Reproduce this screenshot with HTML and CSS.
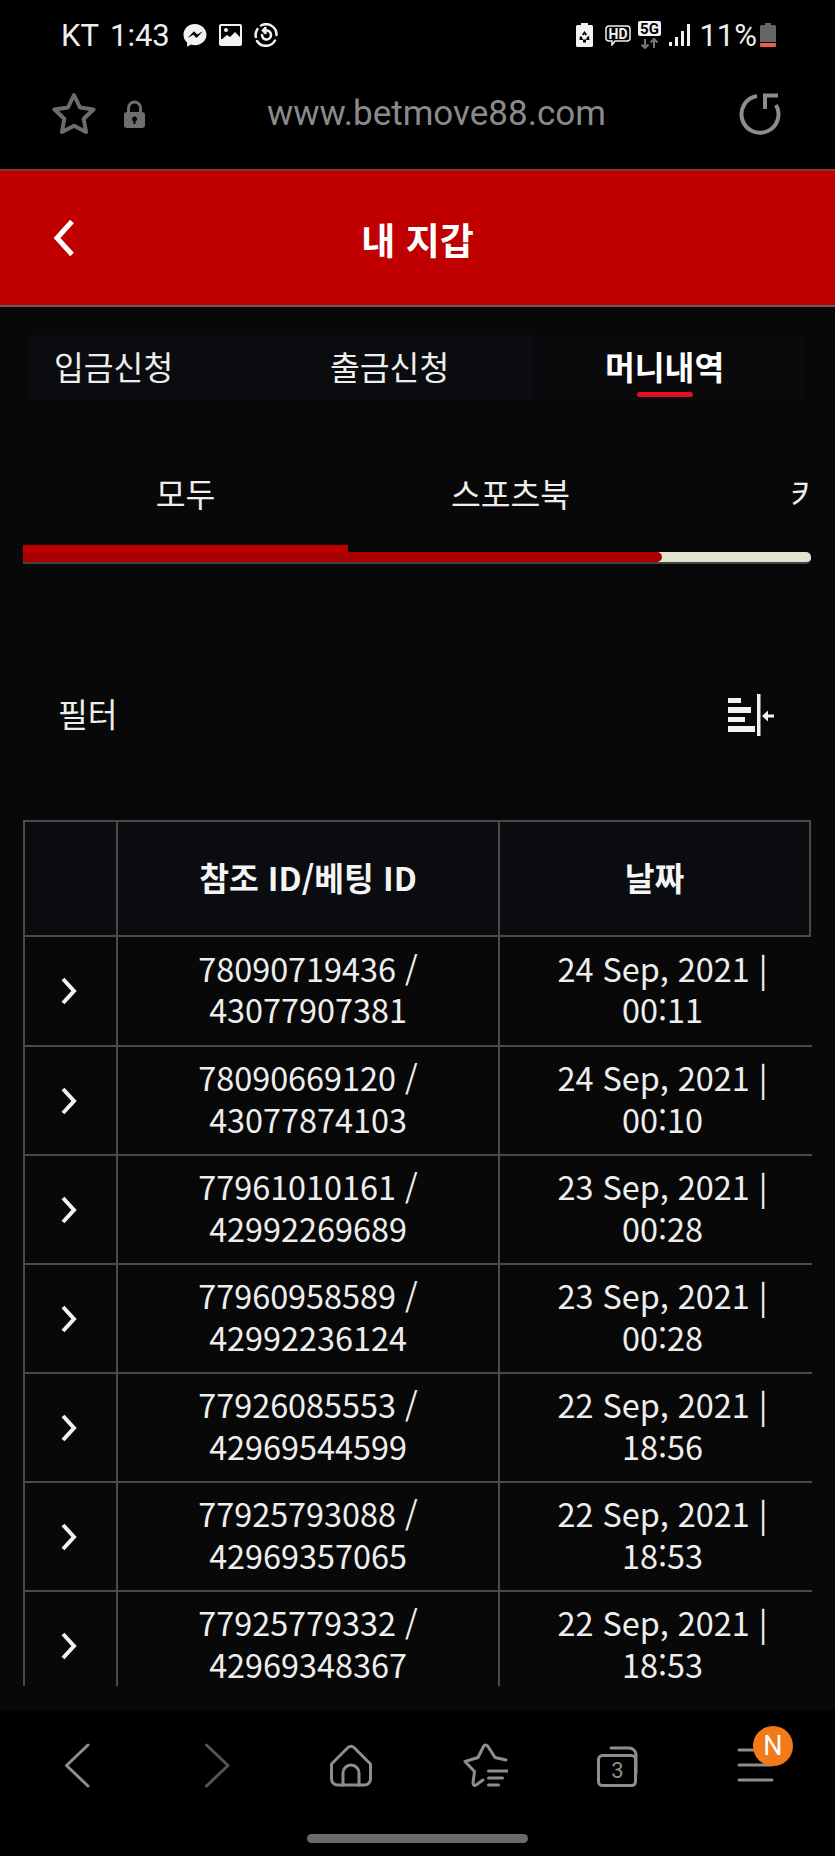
FILE: index.html
```html
<!DOCTYPE html>
<html lang="ko">
<head>
<meta charset="utf-8">
<title>내 지갑</title>
<link rel="stylesheet" href="styles.css">
</head>
<body>
<div class="phone">
  <div class="status">
    <div class="status-left">
      <span class="carrier">KT</span><span class="clock">1:43</span>
      <svg class="si-msg" width="24" height="25" viewBox="0 0 24 25"><path class="white" d="M12 1C5.400 1 .5 5.700.5 11.800c0 3.200 1.300 5.900 3.600 7.800v4.200l3.900-2.200c1.300.4 2.600.6 4 .6 6.600 0 11.500-4.700 11.500-10.400S18.600 1 12 1z"/><path class="blk" d="M4.700 15l6.300-6.800 3.200 3.300 5.600-3.300-6.200 6.800-3.300-3.300z"/></svg>
      <svg class="si-img" width="23" height="22" viewBox="0 0 23 22"><rect class="white" width="23" height="22" rx="2"/><rect class="blk" x="2" y="2" width="19" height="13"/><circle class="white" cx="7" cy="6" r="2"/><path class="white" d="M2 16l6-5 3 2 5-5 5 5v4z"/></svg>
      <svg class="si-sync" width="24" height="24" viewBox="0 0 24 24"><path class="ln2w" d="M7 2.500A10.500 10.500 0 0 1 22.500 12M21 17.500A10.500 10.500 0 0 1 3 18M1.800 14A10.500 10.500 0 0 1 3.500 6"/><path class="ln2w" d="M8 12a4.500 4.500 0 1 0 4-4.500H9M11.500 5L9 7.500l2.500 2.500"/></svg>
    </div>
    <div class="status-right">
      <svg width="17" height="24" viewBox="0 0 17 24"><path class="white" d="M5 0h7v2h3.500A1.500 1.500 0 0 1 17 3.500V22.500A1.500 1.500 0 0 1 15.500 24H1.500A1.500 1.500 0 0 1 0 22.500V3.500A1.500 1.500 0 0 1 1.500 2H5z"/><path class="blk" d="M8.500 8l2.500 3.500-1.500 1-1-1.500-1 1.500-1.500-1zM4 13l2 1 1 3H3.500zM13 13l-2 1-1 3h3.500zM7 16.500h3v3H7z"/></svg>
      <svg class="si-hd" width="26" height="21" viewBox="0 0 26 21"><path class="ln15" d="M4 1h18a3 3 0 0 1 3 3v9a3 3 0 0 1-3 3H10l-3 4v-4H4a3 3 0 0 1-3-3V4a3 3 0 0 1 3-3z"/><text class="hd-text" x="13" y="13.500">HD</text></svg>
      <svg class="si-5g" width="23" height="28" viewBox="0 0 23 28"><rect class="white" width="23" height="15" rx="2"/><text class="g-text" x="11.500" y="13">5G</text><path class="ln-grey" d="M7 18v9M3.500 23.500L7 27l3.500-3.500M16 27v-9M12.500 21.500L16 18l3.500 3.500"/></svg>
      <svg class="si-sig" width="21" height="22" viewBox="0 0 21 22"><rect class="white" x="0" y="18" width="3" height="4"/><rect class="white" x="6" y="13" width="3" height="9"/><rect class="white" x="12" y="7" width="3" height="15"/><rect class="white" x="18" y="0" width="3" height="22"/></svg>
      <span class="pct">11%</span>
      <svg class="si-bat" width="16" height="24" viewBox="0 0 16 24"><path class="grey" d="M5 0h6v2h3.500A1.500 1.500 0 0 1 16 3.500V19H0V3.500A1.500 1.500 0 0 1 1.500 2H5z"/><path class="red" d="M0 20h16v2.500a1.500 1.500 0 0 1-1.500 1.500h-13A1.500 1.500 0 0 1 0 22.500z"/></svg>
    </div>
  </div>

  <div class="urlbar">
    <svg class="u-star" width="44" height="44" viewBox="0 0 44 44"><path class="ln-u" d="M22 3l6 12.500 13.500 2-9.800 9.300 2.300 13.200-12-6.300-12 6.300 2.300-13.200-9.800-9.300 13.500-2z"/></svg>
    <svg class="u-lock" width="21" height="28" viewBox="0 0 21 28"><path class="ln-lock" d="M4.500 14V8a6 6 0 0 1 12 0v6"/><rect class="lockfill" y="12" width="21" height="16" rx="3"/><circle class="blk" cx="10.500" cy="19" r="2.500"/><rect class="blk" x="9.500" y="19" width="2" height="5"/></svg>
    <span class="url">www.betmove88.com</span>
    <svg class="u-reload" width="42" height="42" viewBox="0 0 42 42"><path class="ln-r" d="M18 3A18.500 18.500 0 1 0 37 12"/><path class="ln-r" d="M39 2.500H26V16"/></svg>
  </div>

  <main class="app">
    <header class="appbar">
      <svg class="back" width="22" height="38" viewBox="0 0 22 38"><path class="ln-back" d="M19 2.500L4 19l15 16.500"/></svg>
      <h1 class="title">내 지갑</h1>
    </header>

    <nav class="tabs">
      <a class="tab">입금신청</a>
      <a class="tab">출금신청</a>
      <a class="tab tab-active"><span class="tab-label">머니내역<i class="tab-mark"></i></span></a>
    </nav>

    <div class="subtabs">
      <span class="subtab">모두</span>
      <span class="subtab">스포츠북</span>
      <span class="subtab">카지노</span>
    </div>
    <div class="meter">
      <div class="meter-tab"></div>
      <div class="meter-track"><div class="meter-fill"></div></div>
    </div>

    <div class="filter">
      <span class="filter-label">필터</span>
      <svg width="46" height="42" viewBox="0 0 46 42"><rect class="white" x="0" y="4" width="13" height="5"/><rect class="white" x="0" y="13" width="23" height="6"/><rect class="white" x="0" y="23" width="17" height="5"/><rect class="white" x="0" y="32" width="27" height="6"/><rect class="white" x="29" y="0" width="3.500" height="42"/><path class="white" d="M34 22l6-5.500v4h6v3h-6v4z"/></svg>
    </div>

    <div class="table-clip">
      <table class="grid grid-head">
        <colgroup><col class="c1"><col class="c2"><col class="c3-head"></colgroup>
        <thead>
          <tr><th></th><th>참조 ID/베팅 ID</th><th>날짜</th></tr>
        </thead>
      </table>
      <table class="grid grid-body">
        <colgroup><col class="c1"><col class="c2"><col class="c3-body"></colgroup>
        <tbody>
          <tr><td><svg class="chev" width="18" height="28" viewBox="0 0 18 28"><path class="ln-chev" d="M3 2l11 12L3 26"/></svg></td><td>78090719436 / 43077907381</td><td>24 Sep, 2021 | 00:11</td></tr>
          <tr><td><svg class="chev" width="18" height="28" viewBox="0 0 18 28"><path class="ln-chev" d="M3 2l11 12L3 26"/></svg></td><td>78090669120 / 43077874103</td><td>24 Sep, 2021 | 00:10</td></tr>
          <tr><td><svg class="chev" width="18" height="28" viewBox="0 0 18 28"><path class="ln-chev" d="M3 2l11 12L3 26"/></svg></td><td>77961010161 / 42992269689</td><td>23 Sep, 2021 | 00:28</td></tr>
          <tr><td><svg class="chev" width="18" height="28" viewBox="0 0 18 28"><path class="ln-chev" d="M3 2l11 12L3 26"/></svg></td><td>77960958589 / 42992236124</td><td>23 Sep, 2021 | 00:28</td></tr>
          <tr><td><svg class="chev" width="18" height="28" viewBox="0 0 18 28"><path class="ln-chev" d="M3 2l11 12L3 26"/></svg></td><td>77926085553 / 42969544599</td><td>22 Sep, 2021 | 18:56</td></tr>
          <tr><td><svg class="chev" width="18" height="28" viewBox="0 0 18 28"><path class="ln-chev" d="M3 2l11 12L3 26"/></svg></td><td>77925793088 / 42969357065</td><td>22 Sep, 2021 | 18:53</td></tr>
          <tr><td><svg class="chev" width="18" height="28" viewBox="0 0 18 28"><path class="ln-chev" d="M3 2l11 12L3 26"/></svg></td><td>77925779332 / 42969348367</td><td>22 Sep, 2021 | 18:53</td></tr>
        </tbody>
      </table>
    </div>
  </main>

  <footer class="nav">
    <div class="nav-row">
      <div class="nav-cell"><svg width="50" height="50" viewBox="0 0 50 50"><path class="ln-nav" d="M35 5L13.500 25.500 35 46"/></svg></div>
      <div class="nav-cell"><svg width="50" height="50" viewBox="0 0 50 50"><path class="ln-nav-dim" d="M18.500 5L40 25.500 18.500 46"/></svg></div>
      <div class="nav-cell"><svg width="50" height="50" viewBox="0 0 50 50"><path class="ln-nav" d="M8.500 24L25 7.500a4.500 4.500 0 0 1 6 0L47.500 24v15a6 6 0 0 1-6 6h-27a6 6 0 0 1-6-6z"/><path class="ln-nav" d="M20 45V33a8 8 0 0 1 16 0v12"/></svg></div>
      <div class="nav-cell"><svg width="50" height="50" viewBox="0 0 50 50"><path class="ln-nav" d="M48 20L37 17.500 30 6.500c-1.500-2-3.500-2-4.500 0L20 17.500 7 21.500l9.500 10L15 43c0 2.500 1.500 3 3 2l7-5"/><path class="ln-nav" d="M30.500 31h19M30.500 38h14M30.500 45h10"/></svg></div>
      <div class="nav-cell"><svg width="50" height="50" viewBox="0 0 50 50"><path class="ln-nav" d="M18 8h18a7 7 0 0 1 7 7v18"/><rect class="ln-nav" x="5.500" y="15.500" width="37" height="30" rx="4"/><text class="tab-count" x="24.500" y="38">3</text></svg></div>
      <div class="nav-cell nav-menu"><svg width="50" height="50" viewBox="0 0 50 50"><path class="ln-nav" d="M11 10h33M11 25h33M11 40h33"/></svg><span class="badge">N</span></div>
    </div>
    <div class="home-bar"></div>
  </footer>
</div>
</body>
</html>
```

FILE: styles.css
```css
* { box-sizing: border-box; }
html, body { margin: 0; padding: 0; background: #000; }
body { font-family: "Noto Sans CJK KR", "Noto Sans", sans-serif; color: #eee; }

.phone { width: 835px; height: 1856px; display: flex; flex-direction: column; overflow: hidden; background: #000; }

/* svg paint helpers */
.white { fill: #f2f2f2; }
.blk { fill: #000; }
.grey { fill: #666; }
.red { fill: #e8604a; }
.lockfill { fill: #6e6e6e; }
.ln2w { fill: none; stroke: #f2f2f2; stroke-width: 2.5; stroke-linecap: round; }
.ln15 { fill: none; stroke: #f2f2f2; stroke-width: 1.5; }
.ln-grey { fill: none; stroke: #777; stroke-width: 2; }
.ln-u { fill: none; stroke: #6c6c6c; stroke-width: 4; stroke-linejoin: round; }
.ln-lock { fill: none; stroke: #6e6e6e; stroke-width: 3; }
.ln-r { fill: none; stroke: #8c8c8c; stroke-width: 4; }
.ln-back { fill: none; stroke: #fff; stroke-width: 5; }
.ln-chev { fill: none; stroke: #f2f2f2; stroke-width: 4; }
.ln-nav { fill: none; stroke: #8e8e8e; stroke-width: 3; stroke-linecap: round; stroke-linejoin: round; }
.ln-nav-dim { fill: none; stroke: #555; stroke-width: 3; stroke-linecap: round; stroke-linejoin: round; }
.hd-text { font: 700 14px "Roboto", sans-serif; fill: #f2f2f2; text-anchor: middle; }
.g-text { font: 700 15px "Roboto", sans-serif; fill: #000; text-anchor: middle; }
.tab-count { font: 400 22px "Roboto", sans-serif; fill: #8e8e8e; text-anchor: middle; }

/* status bar */
.status { height: 60px; padding: 10px 59px 0 61px; display: flex; justify-content: space-between; align-items: center; font: 400 31px/1 "Roboto", sans-serif; color: #eee; }
.status-left, .status-right { display: flex; align-items: center; }
.carrier { margin-right: 11px; }
.si-msg { margin-left: 13px; }
.si-img { margin-left: 12px; }
.si-sync { margin-left: 12px; }
.si-hd { margin-left: 12px; }
.si-5g { margin-left: 7px; }
.si-sig { margin-left: 8px; }
.pct { margin-left: 9px; }
.si-bat { margin-left: 3px; }

/* url bar */
.urlbar { height: 109px; display: flex; align-items: center; padding: 0 0 2px 52px; }
.u-lock { margin-left: 28px; }
.url { margin-left: 122px; width: 338px; font: 400 35px/1 "Roboto", sans-serif; color: #8a8a8a; white-space: nowrap; }
.u-reload { margin-left: 134px; }

/* app */
.app { flex: 1; min-height: 0; display: flex; flex-direction: column; background: #080808; }
.appbar { height: 138px; flex: none; position: relative; display: flex; align-items: center; justify-content: center; background: #c00000; border-top: 2px solid #8a3434; border-bottom: 2px solid #6a5a5a; }
.back { position: absolute; left: 53px; top: 48px; }
.title { margin: 0 0 -2px; font: 700 37px/1 "Noto Sans CJK KR", sans-serif; color: #fff; }

.tabs { flex: none; margin: 28px 31px 0 29px; height: 65px; display: grid; grid-template-columns: 276px 228px 271px; background: #0a0c10; }
.tab { padding: 11px 0 0 25px; font-size: 32.4px; line-height: 40px; color: #eee; }
.tab-active { padding-left: 72px; background: #0a0a0c; font-weight: 700; color: #fff; }
.tab-label { display: inline-flex; flex-direction: column; align-items: center; }
.tab-mark { display: block; width: 56px; height: 5px; margin-top: 6px; border-radius: 3px; background: #e01020; }

.subtabs { flex: none; margin: 73px 24px 0 23px; height: 72px; display: flex; overflow: hidden; }
.subtab { flex: 0 0 325px; text-align: center; font-size: 32.4px; line-height: 40px; color: #eee; }

.meter { flex: none; margin: 0 24px 0 23px; }
.meter-tab { width: 325px; height: 7px; background: #c00000; }
.meter-track { height: 12px; border-bottom: 2px solid #444; background: #e2e2d0; border-radius: 0 5px 5px 0; }
.meter-fill { width: 639px; height: 10px; border-radius: 0 5px 5px 0; background: #a80000; }

.filter { flex: none; margin-top: 111px; height: 80px; padding: 0 61px 4px 58px; display: flex; align-items: center; justify-content: space-between; }
.filter svg { margin-bottom: -4px; }
.filter-label { font-size: 32.4px; line-height: 40px; color: #eee; }

.table-clip { flex: none; height: 866px; margin: 65px 23px 0 23px; overflow: hidden; }
.grid { border-collapse: collapse; table-layout: fixed; }
.grid-head { width: 786px; background: #0a0c10; }
.grid-body { width: 802px; }
.c1 { width: 93px; }
.c2 { width: 382px; }
.c3-head { width: 311px; }
.c3-body { width: 327px; }
.grid th, .grid td { border: 2px solid #4a4a4a; text-align: center; font-size: 32.4px; color: #eee; }
.grid th { height: 115px; padding: 0 0 4px; font-weight: 700; line-height: 40px; color: #f4f4f4; }
.grid td { height: 109px; line-height: 41.5px; padding: 0 24px 6px; }
.grid td:first-child { padding: 0; }
.grid-body tr:first-child td { border-top: 0; }
.chev { display: block; margin: 0 0 0 35px; }

/* bottom nav */
.nav { height: 146px; flex: none; background: #000; display: flex; flex-direction: column; align-items: center; }
.nav-row { width: 100%; padding: 30px 0 0 10px; display: flex; }
.nav-cell { width: 135px; height: 50px; display: flex; justify-content: center; }
.nav-menu { position: relative; }
.badge { position: absolute; left: 68px; top: -14px; width: 40px; height: 40px; border-radius: 50%; background: #f27a1a; color: #fff; font: 400 27px/40px "Roboto", sans-serif; text-align: center; }
.home-bar { width: 221px; height: 9px; margin-top: 44px; border-radius: 5px; background: #6a6a6a; }
```
